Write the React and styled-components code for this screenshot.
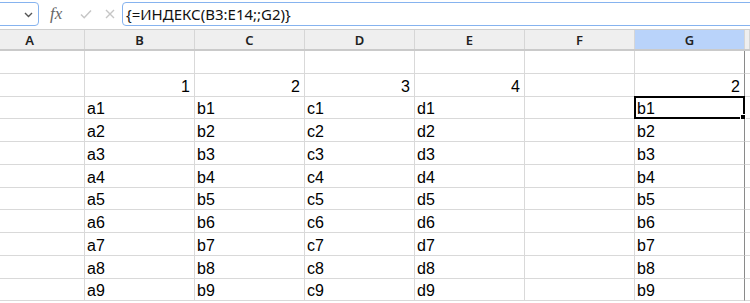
import React from 'react';
import styled, { createGlobalStyle } from 'styled-components';

const Global = createGlobalStyle`
  html, body { margin: 0; padding: 0; background: #fff; overflow: hidden; }
  #root { width: 750px; height: 303px; overflow: hidden; }
`;

const Page = styled.div`
  width: 750px;
  height: 303px;
  overflow: hidden;
  background: #fff;
`;

const Toolbar = styled.div`
  height: 29px;
  display: flex;
  align-items: flex-start;
  padding-top: 2px;
  box-sizing: border-box;
  font-family: "Noto Sans", sans-serif;
`;

const NameBox = styled.div`
  flex: none;
  margin-left: -12px;
  width: 51px;
  height: 24px;
  box-sizing: border-box;
  border: 1px solid #86b3ef;
  border-radius: 4px;
  display: flex;
  align-items: center;
  justify-content: flex-end;
  padding-right: 4px;
  color: #555;
`;

const Tools = styled.div`
  flex: none;
  display: flex;
  align-items: center;
  height: 24px;
  margin-left: 10px;
  width: 73px;
`;

const Fx = styled.span`
  font-family: "Liberation Serif", serif;
  font-style: italic;
  font-size: 17px;
  color: #666;
  width: 24px;
  margin-left: 1px;
`;

const ToolIcon = styled.span`
  display: flex;
  width: 25px;
  justify-content: center;
  color: #c4c4c4;
`;

const Formula = styled.div`
  flex: none;
  width: 700px;
  height: 24px;
  box-sizing: border-box;
  border: 1px solid #86b3ef;
  border-radius: 4px;
  display: flex;
  align-items: center;
  padding-left: 3px;
  font-size: 15px;
  color: #111;
`;

const cols = '85px repeat(6, 110px) 1fr';

const HeaderRow = styled.div`
  display: grid;
  grid-template-columns: ${cols};
  height: 22px;
  box-sizing: border-box;
  border-top: 1px solid #cfcfcf;
  border-bottom: 2px solid #cacaca;
  background: #efefef;
`;

const HeaderCell = styled.div`
  display: flex;
  align-items: center;
  justify-content: center;
  border-right: 1px solid #d6d6d6;
  background: ${p => (p.$active ? '#b9d3fa' : '#efefef')};
  font-family: "Noto Sans", sans-serif;
  font-size: 13px;
  font-weight: 600;
  color: #222;
  padding-right: ${p => p.$pad || 0}px;
`;

const Row = styled.div`
  display: grid;
  grid-template-columns: ${cols};
  height: 22.75px;
`;

const Cell = styled.div`
  position: relative;
  box-sizing: border-box;
  border-right: 1px solid ${p => (p.$edge ? '#8a8a8a' : '#d9d9d9')};
  border-bottom: 1px solid #d9d9d9;
  display: flex;
  align-items: flex-end;
  justify-content: ${p => (p.$num ? 'flex-end' : 'flex-start')};
  padding: 0 ${p => (p.$num ? '4px' : '0')} 0 ${p => (p.$num ? '0' : '2px')};
  font-family: "Liberation Sans", Arial, sans-serif;
  font-size: 16px;
  line-height: 18px;
  color: #000;
  white-space: nowrap;
`;

const Filler = styled.div`
  border-bottom: 1px solid #d9d9d9;
`;

const Cursor = styled.div`
  position: absolute;
  left: -1px;
  top: -1px;
  right: -1px;
  bottom: -1px;
  border: 2px solid #000;
  pointer-events: none;
`;

const Handle = styled.div`
  position: absolute;
  right: -3px;
  bottom: -3px;
  width: 6px;
  height: 6px;
  background: #000;
  border: 1px solid #fff;
  box-sizing: border-box;
`;

const letters = ['A', 'B', 'C', 'D', 'E', 'F', 'G'];

const Chevron = () => (
  <svg width="11" height="11" viewBox="0 0 11 11" fill="none">
    <path d="M2 4l3.5 3.5L9 4" stroke="#555" strokeWidth="1.4" />
  </svg>
);

const Check = () => (
  <svg width="14" height="14" viewBox="0 0 14 14" fill="none">
    <path d="M2 7.5l3.2 3.2L12 3.5" stroke="#c6c6c6" strokeWidth="1.5" />
  </svg>
);

const Cross = () => (
  <svg width="12" height="12" viewBox="0 0 12 12" fill="none">
    <path d="M2 2l8 8M10 2l-8 8" stroke="#c6c6c6" strokeWidth="1.4" />
  </svg>
);

const makeRows = () => {
  const rows = [];
  rows.push(['', '', '', '', '', '', '']);
  rows.push(['', 1, 2, 3, 4, '', 2]);
  for (let i = 1; i <= 9; i++) {
    rows.push(['', 'a' + i, 'b' + i, 'c' + i, 'd' + i, '', 'b' + i]);
  }
  return rows;
};

export default function App() {
  const rows = makeRows();
  return (
    <Page>
      <Global />
      <Toolbar>
        <NameBox><Chevron /></NameBox>
        <Tools>
          <Fx>fx</Fx>
          <ToolIcon><Check /></ToolIcon>
          <ToolIcon><Cross /></ToolIcon>
        </Tools>
        <Formula>{'{=ИНДЕКС(B3:E14;;G2)}'}</Formula>
      </Toolbar>
      <HeaderRow>
        {letters.map(l => (
          <HeaderCell key={l} $active={l === 'G'} $pad={l === 'A' ? 25 : 0}>{l}</HeaderCell>
        ))}
        <HeaderCell />
      </HeaderRow>
      {rows.map((r, ri) => (
        <Row key={ri}>
          {r.map((v, ci) => (
            <Cell key={ci} $num={typeof v === 'number'} $edge={ci === 6}>
              {v}
              {ri === 2 && ci === 6 && (
                <Cursor><Handle /></Cursor>
              )}
            </Cell>
          ))}
          <Filler />
        </Row>
      ))}
    </Page>
  );
}
